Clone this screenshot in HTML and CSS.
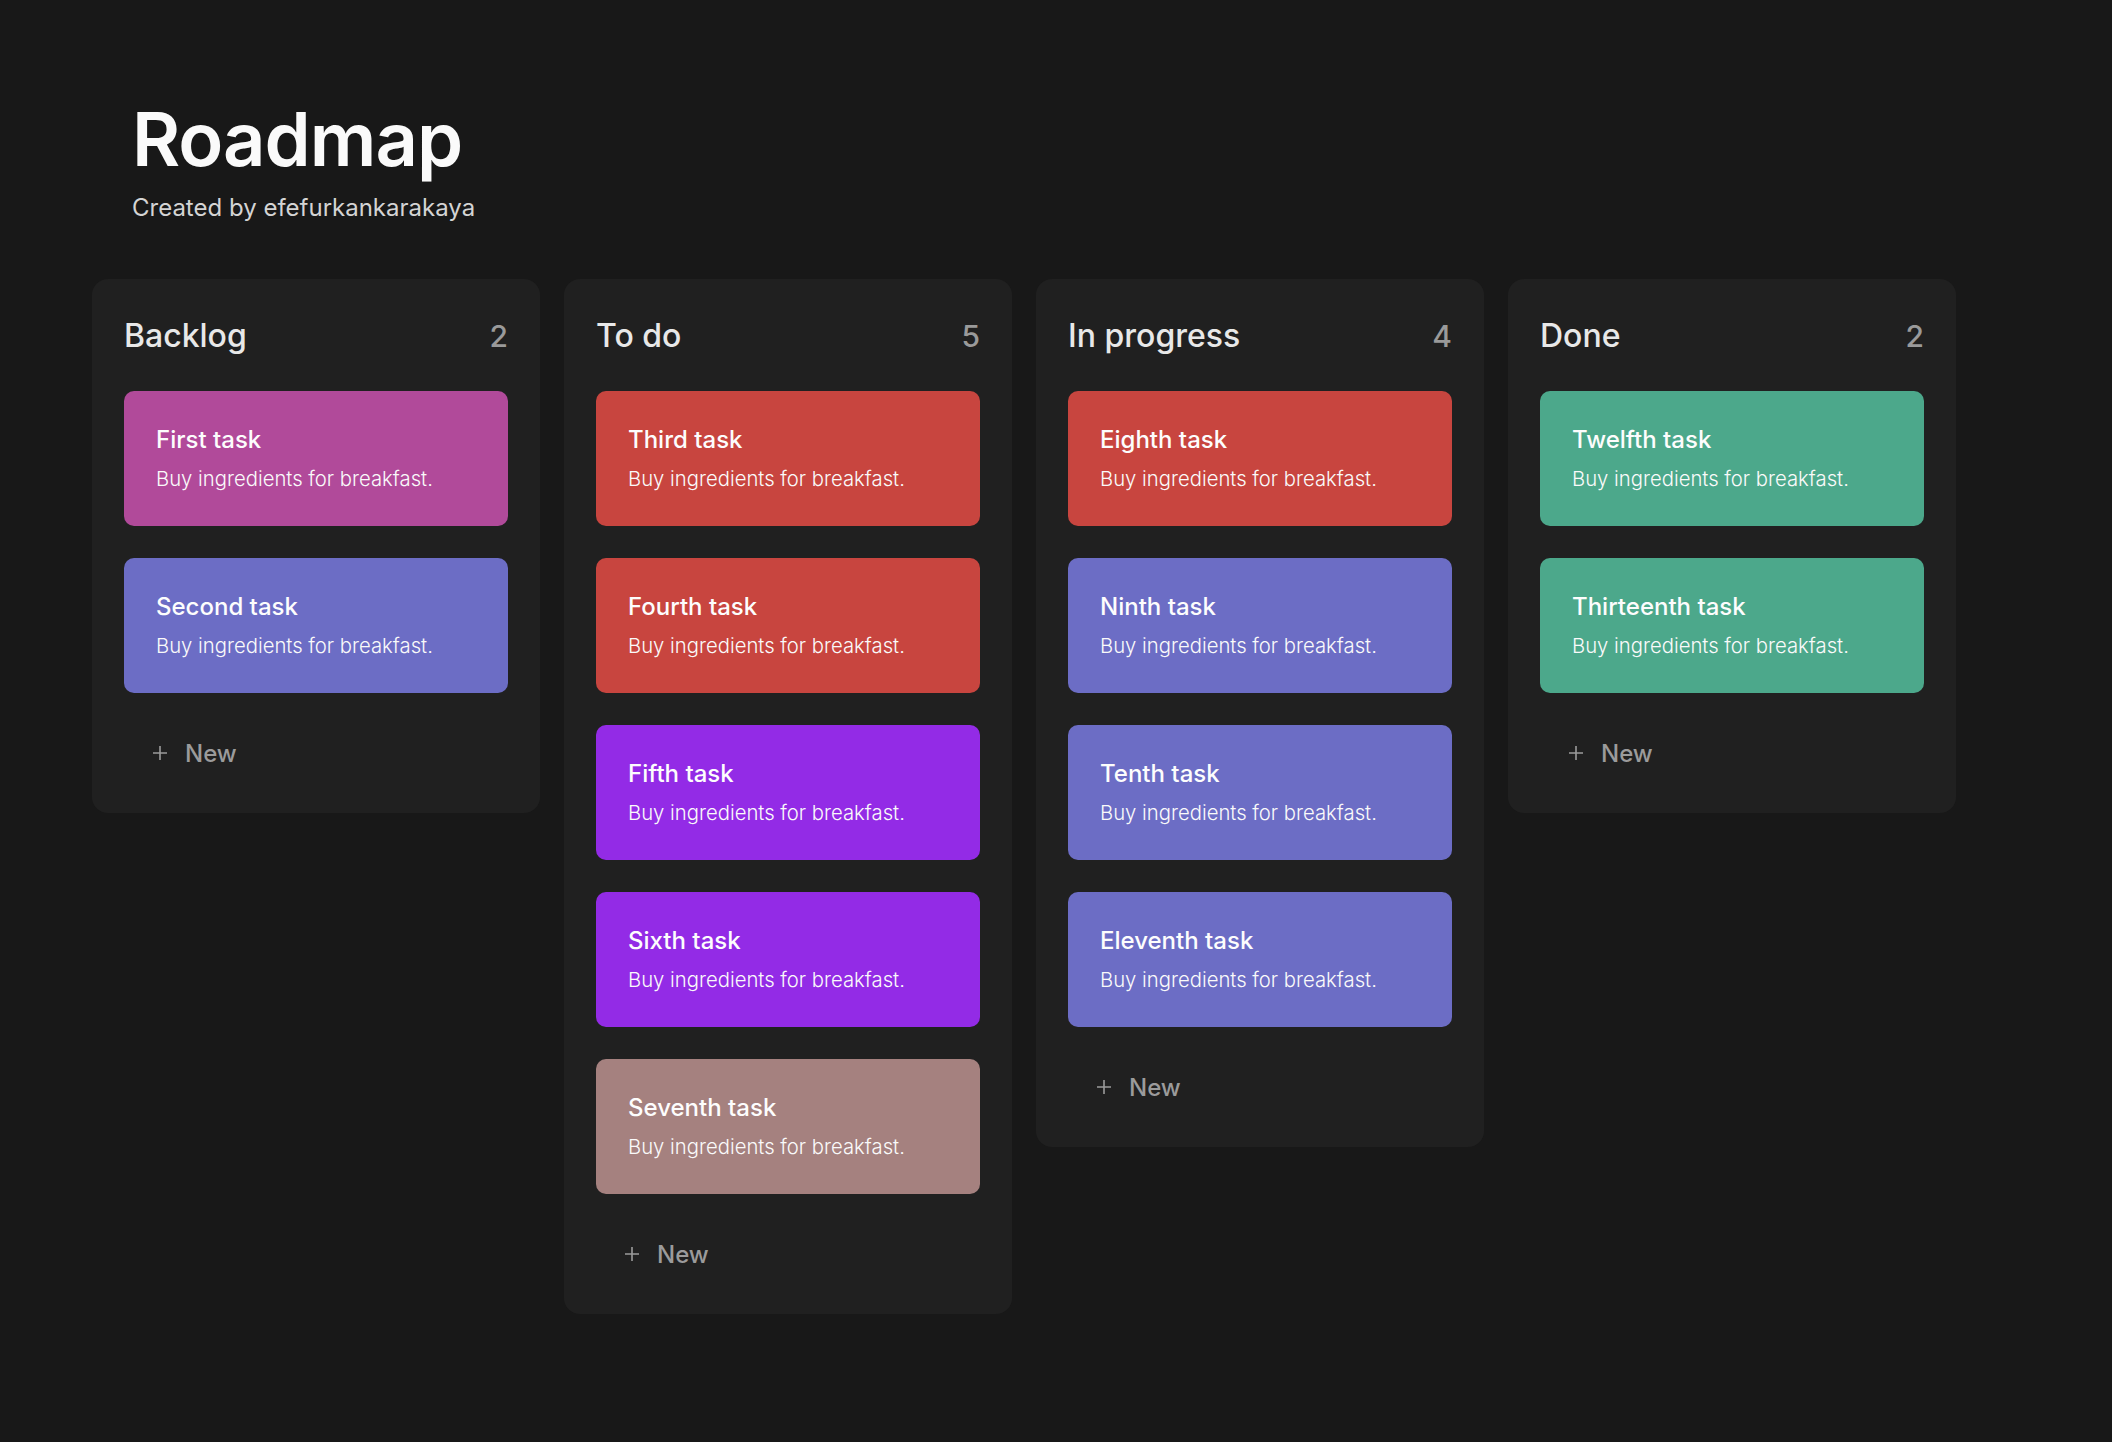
FILE: index.html
```html
<!DOCTYPE html>
<html lang="en">
<head>
<meta charset="utf-8">
<title>Roadmap</title>
<link rel="stylesheet" href="styles.css">
</head>
<body>
<main class="page">
  <header class="header">
    <h1 class="title">Roadmap</h1>
    <p class="subtitle">Created by efefurkankarakaya</p>
  </header>
  <section class="board">
    <div class="column">
      <div class="column-head"><h2 class="column-title">Backlog</h2><span class="count">2</span></div>
      <div class="card pink"><h3 class="card-title">First task</h3><p class="card-desc">Buy ingredients for breakfast.</p></div>
      <div class="card violet"><h3 class="card-title">Second task</h3><p class="card-desc">Buy ingredients for breakfast.</p></div>
      <button class="new"><svg class="plus" viewBox="0 0 16 16" width="16" height="16"><path d="M8 1v14M1 8h14" stroke="currentColor" stroke-width="1.6" fill="none"/></svg><span>New</span></button>
    </div>
    <div class="column">
      <div class="column-head"><h2 class="column-title">To do</h2><span class="count">5</span></div>
      <div class="card red"><h3 class="card-title">Third task</h3><p class="card-desc">Buy ingredients for breakfast.</p></div>
      <div class="card red"><h3 class="card-title">Fourth task</h3><p class="card-desc">Buy ingredients for breakfast.</p></div>
      <div class="card purple"><h3 class="card-title">Fifth task</h3><p class="card-desc">Buy ingredients for breakfast.</p></div>
      <div class="card purple"><h3 class="card-title">Sixth task</h3><p class="card-desc">Buy ingredients for breakfast.</p></div>
      <div class="card mauve"><h3 class="card-title">Seventh task</h3><p class="card-desc">Buy ingredients for breakfast.</p></div>
      <button class="new"><svg class="plus" viewBox="0 0 16 16" width="16" height="16"><path d="M8 1v14M1 8h14" stroke="currentColor" stroke-width="1.6" fill="none"/></svg><span>New</span></button>
    </div>
    <div class="column">
      <div class="column-head"><h2 class="column-title">In progress</h2><span class="count">4</span></div>
      <div class="card red"><h3 class="card-title">Eighth task</h3><p class="card-desc">Buy ingredients for breakfast.</p></div>
      <div class="card violet"><h3 class="card-title">Ninth task</h3><p class="card-desc">Buy ingredients for breakfast.</p></div>
      <div class="card violet"><h3 class="card-title">Tenth task</h3><p class="card-desc">Buy ingredients for breakfast.</p></div>
      <div class="card violet"><h3 class="card-title">Eleventh task</h3><p class="card-desc">Buy ingredients for breakfast.</p></div>
      <button class="new"><svg class="plus" viewBox="0 0 16 16" width="16" height="16"><path d="M8 1v14M1 8h14" stroke="currentColor" stroke-width="1.6" fill="none"/></svg><span>New</span></button>
    </div>
    <div class="column">
      <div class="column-head"><h2 class="column-title">Done</h2><span class="count">2</span></div>
      <div class="card green"><h3 class="card-title">Twelfth task</h3><p class="card-desc">Buy ingredients for breakfast.</p></div>
      <div class="card green"><h3 class="card-title">Thirteenth task</h3><p class="card-desc">Buy ingredients for breakfast.</p></div>
      <button class="new"><svg class="plus" viewBox="0 0 16 16" width="16" height="16"><path d="M8 1v14M1 8h14" stroke="currentColor" stroke-width="1.6" fill="none"/></svg><span>New</span></button>
    </div>
  </section>
</main>
</body>
</html>
```

FILE: styles.css
```css
* { box-sizing: border-box; }
html, body { margin: 0; padding: 0; }
body {
  background: #181818;
  font-family: Inter, "Noto Sans", sans-serif;
  color: #f5f5f5;
  min-height: 1442px;
}
.page {
  padding: 96px 0 0 92px;
}
.header {
  padding-left: 40px;
}
.title {
  margin: 0;
  font-size: 74px;
  line-height: 86px;
  font-weight: 600;
  letter-spacing: -1px;
  color: #fafafa;
}
.subtitle {
  margin: 11px 0 0;
  font-size: 24px;
  line-height: 29px;
  color: #d4d4d4;
}
.board {
  margin-top: 57px;
  display: flex;
  align-items: flex-start;
  gap: 24px;
}
.column {
  width: 448px;
  background: #202020;
  border-radius: 16px;
  padding: 32px;
  display: flex;
  flex-direction: column;
  gap: 32px;
}
.column-head {
  display: flex;
  justify-content: space-between;
  align-items: center;
  height: 40px;
  margin: 5px 0 3px;
}
.column-title {
  margin: 0;
  font-size: 32px;
  line-height: 40px;
  font-weight: 500;
  color: #e8e8e8;
}
.count {
  font-size: 30px;
  line-height: 40px;
  font-weight: 500;
  color: #9a9a9a;
}
.card {
  height: 135px;
  border-radius: 10px;
  padding: 34px 32px 0;
}
.card-title {
  margin: 0;
  font-size: 24px;
  line-height: 30px;
  font-weight: 500;
  color: #fdfdfd;
}
.card-desc {
  margin: 10px 0 0;
  font-size: 20.3px;
  line-height: 28px;
  font-weight: 300;
  color: #fafafa;
}
.pink { background: #b14a9a; }
.violet { background: #6c6dc5; }
.red { background: #c8453f; }
.purple { background: #932be6; }
.mauve { background: #a5817f; }
.green { background: #4ca88b; }
.new {
  height: 56px;
  display: flex;
  align-items: center;
  gap: 17px;
  padding: 0 0 0 28px;
  background: none;
  border: 0;
  color: #9b9b9b;
  font-family: Inter, "Noto Sans", sans-serif;
  font-size: 24px;
  font-weight: 500;
  cursor: pointer;
  width: max-content;
}
.plus { display: block; }
```
